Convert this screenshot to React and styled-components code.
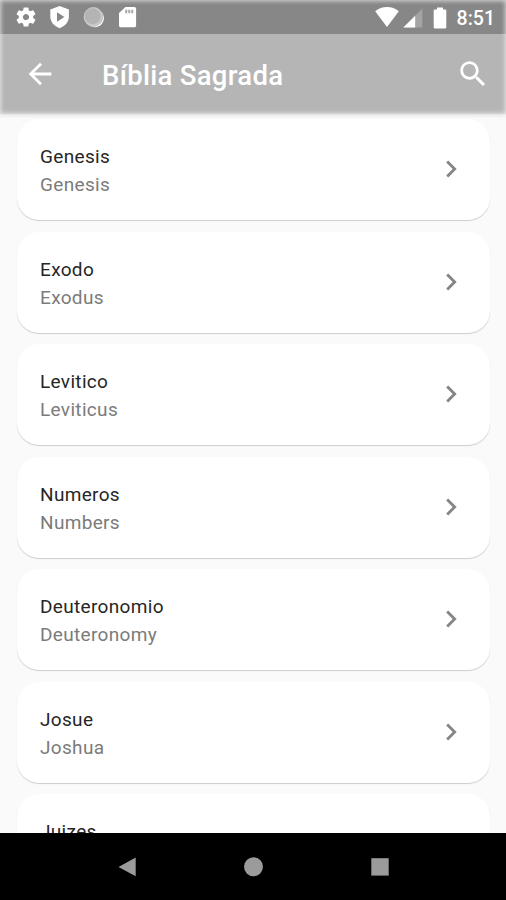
import React from 'react';
import styled, { createGlobalStyle } from 'styled-components';

const books = [
  { title: 'Genesis', subtitle: 'Genesis' },
  { title: 'Exodo', subtitle: 'Exodus' },
  { title: 'Levitico', subtitle: 'Leviticus' },
  { title: 'Numeros', subtitle: 'Numbers' },
  { title: 'Deuteronomio', subtitle: 'Deuteronomy' },
  { title: 'Josue', subtitle: 'Joshua' },
  { title: 'Juizes' },
];

const App = () => {
  return (
    <>
      <GlobalStyle />
      <Screen>
        <Header>
          <StatusBar>
            <StatusIcons>
              <Icon $size={24} viewBox="0 0 24 24">
                <path d="M19.14 12.94c.04-.3.06-.61.06-.94 0-.32-.02-.64-.07-.94l2.03-1.58a.49.49 0 0 0 .12-.61l-1.92-3.32a.488.488 0 0 0-.59-.22l-2.39.96c-.5-.38-1.03-.7-1.62-.94l-.36-2.54a.484.484 0 0 0-.48-.41h-3.84c-.24 0-.43.17-.47.41l-.36 2.54c-.59.24-1.13.57-1.62.94l-2.39-.96c-.22-.08-.47 0-.59.22L2.74 8.87c-.12.21-.08.47.12.61l2.03 1.58c-.05.3-.09.63-.09.94s.02.64.07.94l-2.03 1.58a.49.49 0 0 0-.12.61l1.92 3.32c.12.22.37.29.59.22l2.39-.96c.5.38 1.03.7 1.62.94l.36 2.54c.05.24.24.41.48.41h3.84c.24 0 .44-.17.47-.41l.36-2.54c.59-.24 1.13-.56 1.62-.94l2.39.96c.22.08.47 0 .59-.22l1.92-3.32c.12-.22.07-.47-.12-.61l-2.01-1.58zM12 15.1A3.1 3.1 0 0 1 8.9 12c0-1.700 1.400-3.100 3.100-3.100s3.100 1.400 3.100 3.100-1.400 3.100-3.100 3.100z" />
              </Icon>
              <Icon $size={24} viewBox="0 0 24 24">
                <path
                  fillRule="evenodd"
                  d="M11.600 1 2.300 4.500v7c0 5.400 3.900 9.800 9.300 11.700 5.400-1.900 9.300-6.300 9.300-11.700v-7L11.600 1zM9 7.300v9.400l7.400-4.700z"
                />
              </Icon>
              <Icon $size={24} viewBox="0 0 24 24">
                <circle cx="11.300" cy="11.800" r="9.700" fill="#c9c9c9" />
                <path d="M19.500 6.600a9.700 9.700 0 0 1-12.400 14A9.400 9.400 0 0 0 19.500 6.600z" />
                <circle cx="10.700" cy="11.200" r="8" fill="#b4b4b4" />
              </Icon>
              <Icon $size={24} viewBox="0 0 24 24">
                <path d="M18.300 2H9.500L3 8v12.400c0 1 .8 1.800 1.800 1.800h13.500c1 0 1.800-.8 1.800-1.800V3.800c0-1-.8-1.800-1.800-1.800z" />
                <path
                  fill="#a2a2a2"
                  d="M9.300 4.700h1.900v3.600H9.300zm3 0h1.900v3.600h-1.900zm3 0h1.900v3.600h-1.900z"
                />
              </Icon>
            </StatusIcons>
            <StatusInfo>
              <Icon $size={24} viewBox="0 0 24 24">
                <path d="M12 22 .2 6.300C3.400 3.600 7.400 2.100 12 2.100s8.600 1.500 11.800 4.200z" />
              </Icon>
              <Signal $size={20} viewBox="0 0 20 20">
                <path d="M19.300.6v19H.3z" fill="#a4a4a4" />
                <path d="M12.200 7.700v11.900H.3z" />
              </Signal>
              <Battery viewBox="0 0 14 22">
                <path d="M4 .6h6v2h2.100c.7 0 1.200.5 1.200 1.200v16.400c0 .7-.5 1.200-1.200 1.200H1.900c-.7 0-1.200-.5-1.200-1.200V3.800c0-.7.5-1.200 1.200-1.200H4z" />
              </Battery>
              <Clock>8:51</Clock>
            </StatusInfo>
          </StatusBar>
          <AppBar>
            <IconButton aria-label="Back">
              <Icon $size={34} viewBox="0 0 24 24">
                <path d="M20 11H7.830l5.590-5.590L12 4l-8 8 8 8 1.410-1.410L7.830 13H20v-2z" />
              </Icon>
            </IconButton>
            <Title>Bíblia Sagrada</Title>
            <IconButton aria-label="Search">
              <Icon $size={34} viewBox="0 0 24 24">
                <path d="M15.500 14h-.790l-.280-.270A6.471 6.471 0 0 0 16 9.500 6.500 6.500 0 1 0 9.500 16c1.610 0 3.090-.590 4.230-1.570l.270.280v.790l5 4.990L20.490 19l-4.990-5zm-6 0C7.010 14 5 11.990 5 9.500S7.010 5 9.500 5 14 7.010 14 9.500 11.990 14 9.500 14z" />
              </Icon>
            </IconButton>
          </AppBar>
        </Header>
        <List>
          {books.map((book) => (
            <Card key={book.title}>
              <div>
                <BookTitle>{book.title}</BookTitle>
                <BookSubtitle>{book.subtitle}</BookSubtitle>
              </div>
              <Icon $size={34} $color="#858585" viewBox="0 0 24 24">
                <path d="M10 6 8.590 7.410 13.170 12l-4.580 4.590L10 18l6-6z" />
              </Icon>
            </Card>
          ))}
        </List>
        <NavBar>
          <Icon $size={20} $color="#9b9b9b" viewBox="0 0 20 20">
            <path d="M18.700.4v18.900L1.500 9.900z" />
          </Icon>
          <Icon $size={20} $color="#9b9b9b" viewBox="0 0 20 20">
            <circle cx="10.500" cy="9.800" r="9.500" />
          </Icon>
          <Icon $size={20} $color="#9b9b9b" viewBox="0 0 20 20">
            <path d="M1.300 1.200h17.400v17.400H1.300z" />
          </Icon>
        </NavBar>
      </Screen>
    </>
  );
};

const GlobalStyle = createGlobalStyle`
  body {
    margin: 0;
    background-color: #fafafa;
    font-family: Roboto, sans-serif;
  }
`;

const Screen = styled.div`
  display: flex;
  flex-direction: column;
  width: 506px;
  height: 900px;
  overflow: hidden;
  background-color: #fafafa;
`;

const Header = styled.header`
  position: relative;
  flex: none;
  height: 114px;
  background-color: #b5b5b5;
  box-shadow: 0 1px 4px rgba(215, 215, 215, 0.9);

  /* faded edges */
  &::after {
    content: '';
    position: absolute;
    inset: 0;
    box-shadow: inset 0 0 4px 1px rgba(250, 250, 250, 0.7);
    pointer-events: none;
  }
`;

const StatusBar = styled.div`
  display: flex;
  justify-content: space-between;
  align-items: center;
  box-sizing: border-box;
  height: 34px;
  padding: 0 11px 0 14px;
  background-color: #878787;
`;

const StatusIcons = styled.div`
  display: flex;
  gap: 10px;
`;

const StatusInfo = styled.div`
  display: flex;
  align-items: center;
`;

const Icon = styled.svg`
  display: block;
  flex: none;
  width: ${(props) => props.$size}px;
  height: ${(props) => props.$size}px;
  fill: ${(props) => props.$color || '#fff'};
`;

const Signal = styled(Icon)`
  margin: 1px 0 0 4px;
`;

const Battery = styled(Icon)`
  width: 14px;
  height: 22px;
  margin: 1px 10px 0 10px;
`;

const Clock = styled.span`
  margin-top: 3px;
  font-size: 19.5px;
  font-weight: 500;
  line-height: 24px;
  color: #fff;
`;

const AppBar = styled.div`
  display: flex;
  align-items: center;
  box-sizing: border-box;
  height: 79px;
  padding: 0 16px 0 23px;
`;

const IconButton = styled.button`
  padding: 0;
  border: none;
  background: none;
`;

const Title = styled.h1`
  flex: 1;
  margin: 4px 0 0 45px;
  font-size: 27.5px;
  font-weight: 500;
  line-height: 34px;
  letter-spacing: 0.3px;
  color: #fff;
`;

const List = styled.main`
  display: flex;
  flex-direction: column;
  flex: 1;
  gap: 11.5px;
  min-height: 0;
  padding: 5px 16px 0 17px;
  overflow: hidden;
`;

const Card = styled.article`
  display: flex;
  justify-content: space-between;
  align-items: center;
  flex: none;
  box-sizing: border-box;
  height: 101px;
  padding: 0 22px 1px 23px;
  border-radius: 22px;
  background-color: #fff;
  box-shadow: 0 1px 1px rgba(0, 0, 0, 0.18);
`;

const BookTitle = styled.h2`
  margin: 4px 0 0;
  font-size: 19px;
  font-weight: 400;
  line-height: 28px;
  letter-spacing: 0.33px;
  color: #262626;
`;

const BookSubtitle = styled.p`
  min-height: 28px;
  margin: 0;
  font-size: 19px;
  line-height: 28px;
  letter-spacing: 0.33px;
  color: #7b7b7b;
`;

const NavBar = styled.nav`
  display: flex;
  justify-content: center;
  align-items: center;
  flex: none;
  gap: 106.5px;
  height: 67px;
  background-color: #000;
`;

export default App;
